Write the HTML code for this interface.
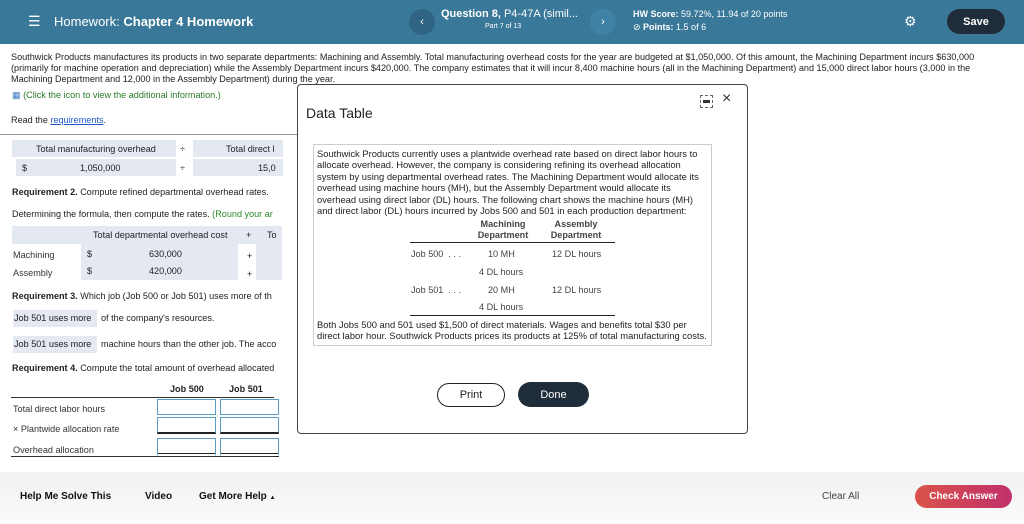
<!DOCTYPE html><html><head><style>
body{margin:0;width:1024px;height:524px;position:relative;overflow:hidden;font-family:"Liberation Sans",Arial,sans-serif;background:#fff;color:#222}
.a{position:absolute;white-space:nowrap}
.hd{position:absolute;left:0;top:0;width:1024px;height:44px;background:#3a7899;color:#fff}
.box{position:absolute;background:#e3e8f1}
.f8{font-size:9.1px}
.m{font-size:9.4px}
.b{font-weight:bold}
.inp{position:absolute;border:1px solid #5a9bc0;background:#fff;height:14px;width:57px}
.c{display:flex;align-items:center;justify-content:center}
</style></head><body>
<div class="hd">
<div class="a" style="left:28px;top:13px;font-size:14px">☰</div>
<div class="a" style="left:54px;top:14px;font-size:13px">Homework: <b>Chapter 4 Homework</b></div>
<div class="a c" style="left:409px;top:9px;width:26px;height:26px;border-radius:13px;background:#2f6582;font-size:11px">‹</div>
<div class="a" style="left:441px;top:8px;font-size:11px"><b>Question 8,</b> P4-47A (simil...</div>
<div class="a" style="left:485px;top:23px;font-size:7px">Part 7 of 13</div>
<div class="a c" style="left:590px;top:9px;width:26px;height:26px;border-radius:13px;background:#3f82a5;font-size:11px">›</div>
<div class="a" style="left:633px;top:9px;font-size:9px"><b>HW Score:</b> 59.72%, 11.94 of 20 points</div>
<div class="a" style="left:633px;top:22px;font-size:9px">⊘ <b>Points:</b> 1.5 of 6</div>
<div class="a" style="left:904px;top:13px;font-size:14px">⚙</div>
<div class="a c" style="left:947px;top:9px;width:58px;height:25px;border-radius:13px;background:#1f2d3a;font-size:11px;font-weight:bold">Save</div>
</div>
<div class="a f8" style="left:11px;top:52px;line-height:11px;white-space:normal;width:1002px">Southwick Products manufactures its products in two separate departments: Machining and Assembly. Total manufacturing overhead costs for the year are budgeted at $1,050,000. Of this amount, the Machining Department incurs $630,000 (primarily for machine operation and depreciation) while the Assembly Department incurs $420,000. The company estimates that it will incur 8,400 machine hours (all in the Machining Department) and 15,000 direct labor hours (3,000 in the Machining Department and 12,000 in the Assembly Department) during the year.</div>
<div class="a f8" style="left:12px;top:90px;color:#2a7a2a"><span style="color:#3a78c0">▦</span> (Click the icon to view the additional information.)</div>
<div class="a f8" style="left:11px;top:115px">Read the <span style="color:#2255cc;text-decoration:underline">requirements</span>.</div>
<div class="a" style="left:0;top:134px;width:300px;border-top:1px solid #999"></div>
<div class="box" style="left:12px;top:140px;width:164px;height:17px"></div>
<div class="box" style="left:193px;top:140px;width:90px;height:17px"></div>
<div class="a f8" style="left:36px;top:144px">Total manufacturing overhead</div>
<div class="a f8" style="left:180px;top:144px">÷</div>
<div class="a f8" style="left:226px;top:144px">Total direct l</div>
<div class="box" style="left:16px;top:159px;width:160px;height:17px"></div>
<div class="box" style="left:193px;top:159px;width:90px;height:17px"></div>
<div class="a f8" style="left:22px;top:163px">$</div>
<div class="a f8" style="left:80px;top:163px">1,050,000</div>
<div class="a f8" style="left:180px;top:163px">÷</div>
<div class="a f8" style="left:258px;top:163px">15,0</div>
<div class="a f8" style="left:12px;top:187px"><b>Requirement 2.</b> Compute refined departmental overhead rates.</div>
<div class="a f8" style="left:12px;top:209px">Determining the formula, then compute the rates. <span style="color:#2a8a2a">(Round your ar</span></div>
<div class="box" style="left:12px;top:226px;width:270px;height:18px"></div>
<div class="a f8" style="left:93px;top:230px">Total departmental overhead cost</div>
<div class="a f8" style="left:246px;top:230px">+</div><div class="a f8" style="left:267px;top:230px">To</div>
<div class="box" style="left:81px;top:244px;width:157px;height:36px"></div>
<div class="box" style="left:256px;top:244px;width:26px;height:36px"></div>
<div class="a f8" style="left:13px;top:250px;color:#333">Machining</div>
<div class="a f8" style="left:87px;top:249px">$</div><div class="a f8" style="left:149px;top:249px">630,000</div><div class="a f8" style="left:247px;top:251px">+</div>
<div class="a f8" style="left:13px;top:268px;color:#333">Assembly</div>
<div class="a f8" style="left:87px;top:266px">$</div><div class="a f8" style="left:149px;top:266px">420,000</div><div class="a f8" style="left:247px;top:269px">+</div>
<div class="a f8" style="left:12px;top:291px"><b>Requirement 3.</b> Which job (Job 500 or Job 501) uses more of th</div>
<div class="box" style="left:13px;top:310px;width:84px;height:17px"></div>
<div class="a f8" style="left:14px;top:313px">Job 501 uses more</div>
<div class="a f8" style="left:101px;top:313px">of the company's resources.</div>
<div class="box" style="left:13px;top:336px;width:84px;height:17px"></div>
<div class="a f8" style="left:14px;top:339px">Job 501 uses more</div>
<div class="a f8" style="left:101px;top:339px">machine hours than the other job. The acco</div>
<div class="a f8" style="left:12px;top:363px"><b>Requirement 4.</b> Compute the total amount of overhead allocated</div>
<div class="a f8 b" style="left:170px;top:384px">Job 500</div><div class="a f8 b" style="left:229px;top:384px">Job 501</div>
<div class="a" style="left:11px;top:397px;width:263px;border-top:1px solid #333"></div>
<div class="a f8" style="left:13px;top:404px;color:#333">Total direct labor hours</div>
<div class="inp" style="left:157px;top:399px"></div><div class="inp" style="left:220px;top:399px"></div>
<div class="a f8" style="left:13px;top:424px;color:#333">× Plantwide allocation rate</div>
<div class="inp" style="left:157px;top:417px;border-bottom:2px solid #222"></div><div class="inp" style="left:220px;top:417px;border-bottom:2px solid #222"></div>
<div class="a f8" style="left:13px;top:445px;color:#333">Overhead allocation</div>
<div class="inp" style="left:157px;top:438px;border-bottom:4px double #222"></div><div class="inp" style="left:220px;top:438px;border-bottom:4px double #222"></div>
<div class="a" style="left:11px;top:456px;width:263px;border-top:1px solid #333"></div>

<div class="a" style="left:297px;top:84px;width:449px;height:348px;border:1px solid #444;border-radius:4px;background:#fff"></div>
<div class="a" style="left:306px;top:105px;font-size:14px;color:#222">Data Table</div>
<div class="a" style="left:700px;top:95px;width:13px;height:13px;border:1px dashed #666;box-sizing:border-box"><div style="margin:4px 2px;height:3px;background:#333"></div></div>
<div class="a" style="left:722px;top:90px;font-size:16px;color:#333">×</div>
<div class="a" style="left:313px;top:144px;width:397px;height:200px;border:1px solid #ccc"></div>
<div class="a m" style="left:317px;top:148px;white-space:normal;width:392px;line-height:11.4px">Southwick Products currently uses a plantwide overhead rate based on direct labor hours to allocate overhead. However, the company is considering refining its overhead allocation system by using departmental overhead rates. The Machining Department would allocate its overhead using machine hours (MH), but the Assembly Department would allocate its overhead using direct labor (DL) hours. The following chart shows the machine hours (MH) and direct labor (DL) hours incurred by Jobs 500 and 501 in each production department:</div>
<div class="a f8 b" style="left:474px;top:219px;color:#444;text-align:center;width:58px;line-height:11px">Machining<br>Department</div>
<div class="a f8 b" style="left:546px;top:219px;color:#444;text-align:center;width:60px;line-height:11px">Assembly<br>Department</div>
<div class="a" style="left:410px;top:242px;width:205px;border-top:1px solid #222"></div>
<div class="a f8" style="left:411px;top:249px;color:#444">Job 500 &nbsp;. . .</div><div class="a f8" style="left:488px;top:249px;color:#444">10 MH</div><div class="a f8" style="left:552px;top:249px;color:#444">12 DL hours</div>
<div class="a f8" style="left:479px;top:267px;color:#444">4 DL hours</div>
<div class="a f8" style="left:411px;top:285px;color:#444">Job 501 &nbsp;. . .</div><div class="a f8" style="left:488px;top:285px;color:#444">20 MH</div><div class="a f8" style="left:552px;top:285px;color:#444">12 DL hours</div>
<div class="a f8" style="left:479px;top:302px;color:#444">4 DL hours</div>
<div class="a" style="left:410px;top:315px;width:205px;border-top:1px solid #222"></div>
<div class="a m" style="left:317px;top:319px;white-space:normal;width:392px;line-height:11.4px">Both Jobs 500 and 501 used $1,500 of direct materials. Wages and benefits total $30 per direct labor hour. Southwick Products prices its products at 125% of total manufacturing costs.</div>
<div class="a c" style="left:437px;top:383px;width:66px;height:22px;border:1.5px solid #222;border-radius:12px;font-size:11px">Print</div>
<div class="a c" style="left:518px;top:382px;width:71px;height:25px;background:#1f2d3a;border-radius:13px;color:#fff;font-size:11px">Done</div>

<div class="a" style="left:0;top:472px;width:1024px;height:52px;background:linear-gradient(#f1f1f1,#fbfbfb)"></div>
<div class="a b" style="left:20px;top:491px;font-size:10px;color:#111">Help Me Solve This</div>
<div class="a b" style="left:145px;top:491px;font-size:10px;color:#111">Video</div>
<div class="a b" style="left:199px;top:491px;font-size:10px;color:#111">Get More Help <span style="font-size:6px">▲</span></div>
<div class="a" style="left:822px;top:491px;font-size:10px;color:#444">Clear All</div>
<div class="a c b" style="left:915px;top:485px;width:97px;height:23px;border-radius:12px;background:linear-gradient(90deg,#d9534a,#c1306b);color:#fff;font-size:10px">Check Answer</div>
</body></html>
